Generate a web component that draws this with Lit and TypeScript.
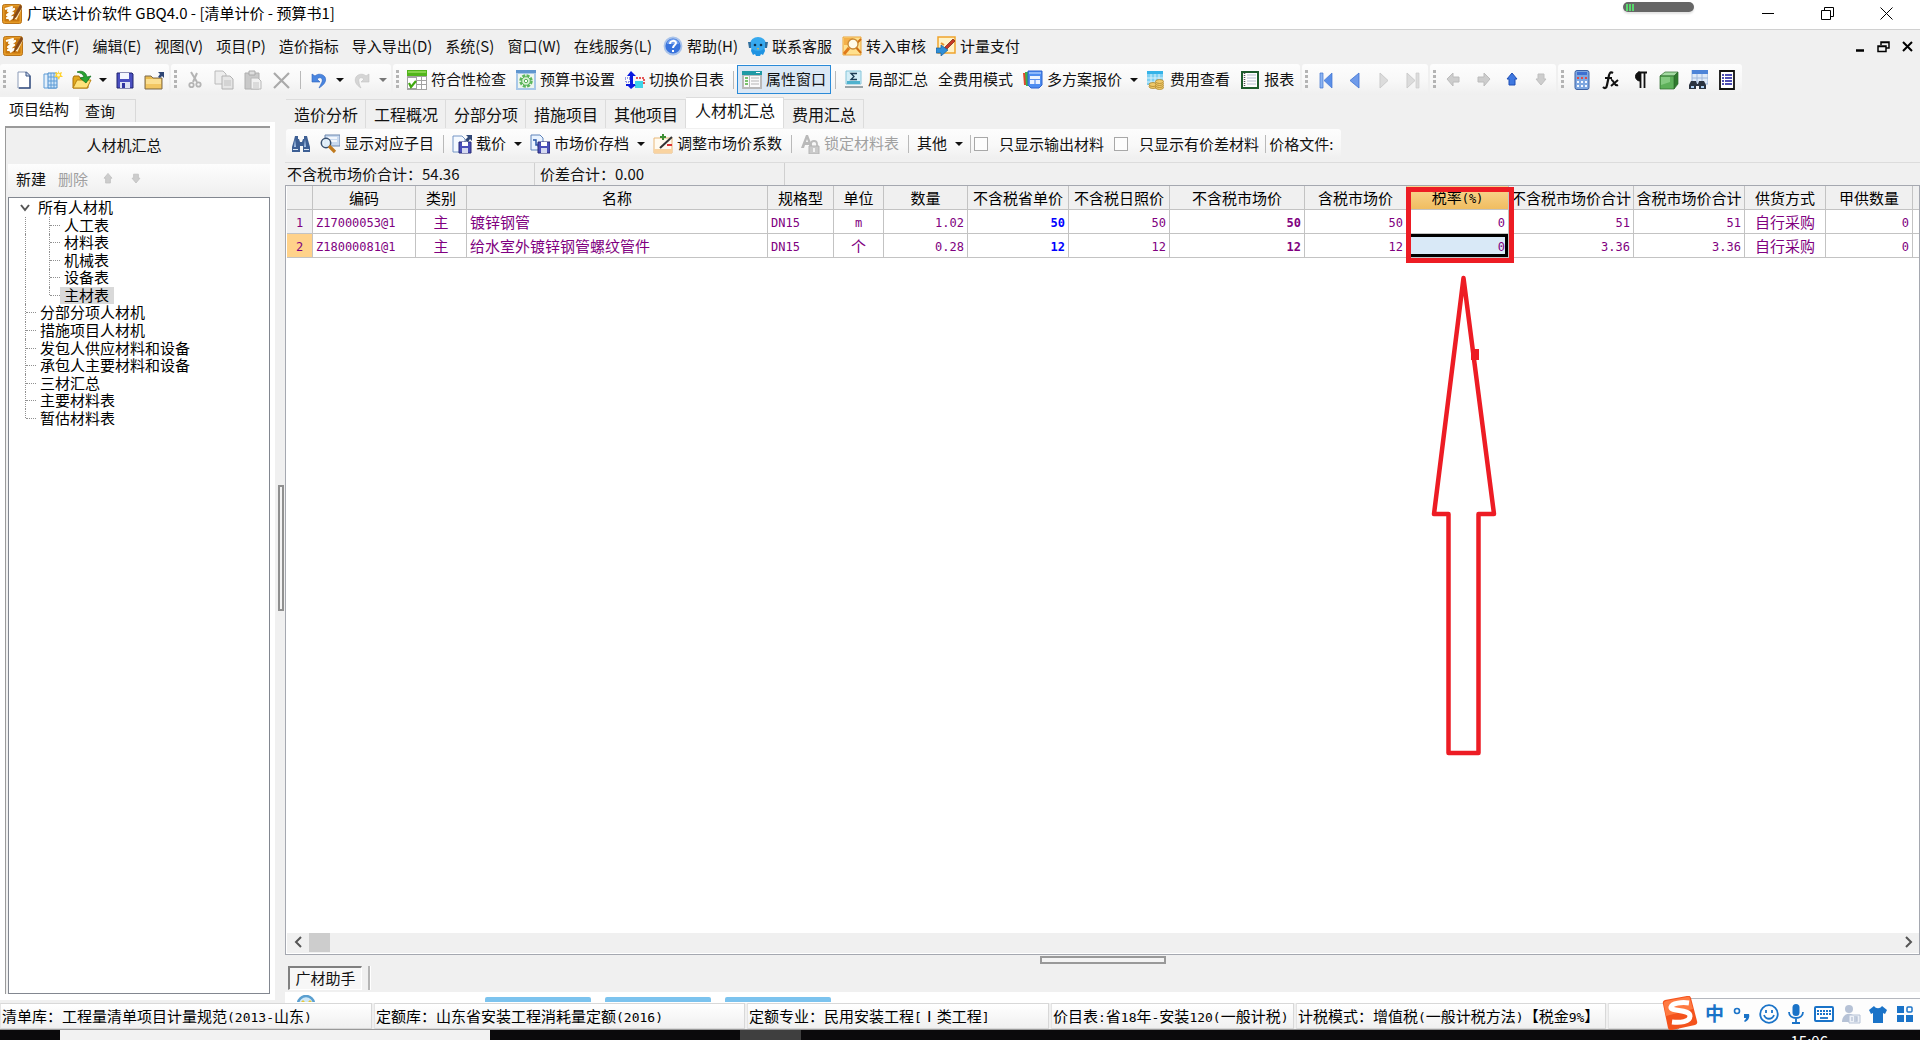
import { LitElement, html, css, svg, nothing } from "lit";
import type { SVGTemplateResult, TemplateResult } from "lit";
import { customElement } from "lit/decorators.js";
import { classMap } from "lit/directives/class-map.js";

const art: Record<string, SVGTemplateResult> = {
  logo: svg`<rect x="0.500" y="0.500" width="19" height="19" rx="2" fill="#e59a26" stroke="#b9741a"/><rect x="2.500" y="2.500" width="15" height="15" rx="1" fill="#c9780f"/><path d="M3 5l7-2-4 4 6-2-7 6 6-2-6 5 6-1-4 3" fill="none" stroke="#fffdf5" stroke-width="2.200" stroke-linejoin="round"/><path d="M19 2L13 15" stroke="#fbe3b0" stroke-width="3.500"/><path d="M18 1l-6 11-1 4 3-3 6-10z" fill="#8a4a14" stroke="#6e3408" stroke-width=".5"/>`,
  file: svg`<path d="M4 2h8l4 4v12H4z" fill="#fff" stroke="#8d9cb8"/><path d="M12 2l4 4v12H5" fill="none" stroke="#3b5484" stroke-width="1.500"/><path d="M12 2v4h4" fill="#c9d6ec" stroke="#3b5484"/>`,
  fileGrid: svg`<path d="M1 4h12v14H1z" fill="#e4f0fb" stroke="#5d9bd6"/><path d="M5 3h9v15H5z" fill="#cfe5f8" stroke="#4a8ccc"/><path d="M8 3v15M11 3v15M5 7h9M5 11h9M5 15h9" stroke="#5d9bd6"/><path d="M15 0l1 3 3-1-1 3 2 2-3 0-1 3-2-3-3 0 2-2-1-3 3 1z" fill="#ffd22e"/><circle cx="15.500" cy="5" r="1.500" fill="#fff6c4"/>`,
  open: svg`<path d="M1 8l1-2h5l1 2h8v10H1z" fill="#e2a91d" stroke="#a9730c"/><path d="M1 18l4-8h14l-4 8z" fill="#ffe27a" stroke="#b9820f"/><path d="M5 2c5-2 9 0 10 5l4-1-5 7-6-5 4-1c-1-3-3-4-7-5z" fill="#27a332" stroke="#0f6d1b" stroke-width=".7"/>`,
  save: svg`<path d="M2 3h15l1 1v14H2z" fill="#4a4fc0" stroke="#20246f"/><path d="M5 3h9v6H5z" fill="#f4f6ff"/><path d="M5 12h10v6H5z" fill="#dfe3f5"/><path d="M7 13h3v5H7z" fill="#3136a0"/>`,
  folderUp: svg`<path d="M1 6h6l2 2h9v11H1z" fill="#e9bb4e" stroke="#7c6a4e"/><path d="M2 9h15v9H2z" fill="#fbdf92"/><path d="M2 14h15v4H2z" fill="#f2c662"/><path d="M14 2h6v6l-2-2-2 2-2-1 2-3z" fill="#2f4675"/>`,
  cut: svg`<path d="M6 2l6 10M12 3L8 12" stroke="#b4b4b4" stroke-width="2" fill="none"/><circle cx="6.500" cy="15" r="2.200" fill="none" stroke="#b4b4b4" stroke-width="1.800"/><circle cx="13.500" cy="14.500" r="2.200" fill="none" stroke="#b4b4b4" stroke-width="1.800"/>`,
  copy: svg`<path d="M1 1h8l3 3v10H1z" fill="#ededed" stroke="#bababa"/><path d="M8 6h8l3 3v10H8z" fill="#e6e6e6" stroke="#b2b2b2"/><path d="M10 11h7M10 13h7M10 15h7" stroke="#c2c2c2"/>`,
  paste: svg`<path d="M2 3h14v16H2z" fill="#c9c9c9" stroke="#b0b0b0"/><path d="M6 1h6v4H6z" fill="#dedede" stroke="#aaa"/><path d="M8 8h7l3 3v8H8z" fill="#f1f1f1" stroke="#b8b8b8"/><path d="M10 13h6M10 15h6M10 17h6" stroke="#c4c4c4"/>`,
  del: svg`<path d="M2 3l15 15M17 3L2 18" stroke="#aaa" stroke-width="2.200" fill="none"/>`,
  undo: svg`<path d="M3 4v8h8L8 9c4-3 6 0 5 3-1 2-2 4-3 6 5-3 8-7 6-11-2-3-7-4-10-1z" fill="#4a86e0" stroke="#2b62be" stroke-width=".6"/>`,
  redo: svg`<path d="M17 4v8H9l3-3c-4-3-6 0-5 3 0 2 1 4 2 6C4 15 2 11 4 7c2-3 7-4 10-1z" fill="#d5d5d5" stroke="#c2c2c2" stroke-width=".6"/>`,
  check: svg`<path d="M0 0h20v6H0z" fill="#52b51c"/><path d="M1 1h18v2H1z" fill="#86d34c"/><path d="M0 6h20v14H0z" fill="#a2a2a2"/><path d="M1 8h8v10H1zM10 7h4v3h-4zM15 7h4v3h-4zM10 11h4v3h-4zM15 11h4v3h-4zM10 15h4v4h-4zM15 15h4v4h-4z" fill="#fff"/><path d="M2 13l2 4 5-6" fill="none" stroke="#3fa70f" stroke-width="2.200"/>`,
  gear: svg`<path d="M0 0h20v20H0z" fill="#a9c8e8"/><path d="M0 0h20v3H0z" fill="#5f96cf"/><path d="M2 4h16v14H2z" fill="#eef6ee"/><circle cx="10" cy="11" r="5.500" fill="none" stroke="#5cb85c" stroke-width="2.500" stroke-dasharray="3 1.300"/><circle cx="10" cy="11" r="4.300" fill="#d9f2d3" stroke="#58b058"/><circle cx="10" cy="11" r="1.700" fill="#fff" stroke="#58b058"/>`,
  swap: svg`<path d="M0 8h5v4H0z" fill="#fff" stroke="#2a37d0" stroke-dasharray="1 1"/><path d="M10 11h8v7h-8z" fill="#3fd3e8"/><path d="M11 8h8v6" fill="none" stroke="#e02020" stroke-width="1.500" stroke-dasharray="2 1"/><path d="M6 1l5 5H8v9h3l-5 4-4-4h3V6H2z" fill="#0a1ae0"/><path d="M1 15h9" stroke="#0a1ae0" stroke-width="2"/>`,
  prop: svg`<path d="M0 1h20v18H0z" fill="#b9b9b9"/><path d="M0 1h20v4H0z" fill="#1f9aa5"/><path d="M14 2h4v1h-4z" fill="#fff"/><path d="M2 6h5v11H2zM8 6h10v11H8z" fill="#fafafa"/><path d="M3 8h3M3 11h3M3 14h3" stroke="#4fae3c" stroke-width="1.500"/><path d="M9 8h8M9 11h8M9 14h8" stroke="#b5b5b5"/>`,
  sigma: svg`<path d="M2 1h15v13H2z" fill="#d4eef7" stroke="#86c5da"/><path d="M3 11h13v3H3z" fill="#4fb2ce"/><path d="M1 16h18v2H1z" fill="#9aa4a8"/><path d="M13 3.500H7L10 6.500 7 9.500h6" fill="none" stroke="#1b3a52" stroke-width="1.300"/>`,
  plans: svg`<path d="M0 3h4v12H1z" fill="#e3482e"/><path d="M2 2h4v14H3z" fill="#3fae4c"/><path d="M5 1h14v14l-3 3H8l-3-3z" fill="#4d8cf0" stroke="#2c63cf"/><path d="M6 2h12v2H6z" fill="#8db8fa"/><path d="M7 6h10v8H7z" fill="#eaf2ff"/><path d="M7 9.500h10M12 9v5" stroke="#5b90ee" stroke-width="1.200"/>`,
  coins: svg`<path d="M1 1h16v14H1z" fill="#7fd0f2"/><path d="M1 1h16v3H1z" fill="#35b3e8"/><path d="M5 4v11M9 4v11M13 4v11M1 8h16M1 12h16" stroke="#d8f1fb"/><g fill="#efca6c" stroke="#a77d20" stroke-width=".7"><ellipse cx="7" cy="16.500" rx="4" ry="2"/><ellipse cx="7" cy="14.500" rx="4" ry="2"/><ellipse cx="13.500" cy="17.500" rx="4" ry="2"/><ellipse cx="13.500" cy="15.500" rx="4" ry="2"/><ellipse cx="13.500" cy="13.500" rx="4" ry="2"/><ellipse cx="13.500" cy="11.500" rx="4" ry="2"/></g>`,
  report: svg`<path d="M1 1h18v18H1z" fill="#1d5b2c"/><path d="M3 3h14v14H3z" fill="#fdfdfd"/><path d="M4.500 3v14" stroke="#555" stroke-width="1.500" stroke-dasharray="1 1"/><path d="M7 5h9M7 8h9M7 11h9M7 14h9" stroke="#b5bdd0"/>`,
  first: svg`<path d="M4 3h3v15H4z" fill="#8cb4f2" stroke="#3f72d0" stroke-width=".7"/><path d="M16 3v15L8 10.500z" fill="#5b8fe8" stroke="#3f72d0" stroke-width=".7"/>`,
  prev: svg`<path d="M14 3v15L5 10.500z" fill="#6f9bea" stroke="#3f72d0" stroke-width=".8"/>`,
  next: svg`<path d="M6 3v15l8-7.500z" fill="#dcdcdc" stroke="#cbcbcb"/>`,
  last: svg`<path d="M4 3v15l8-7.500z" fill="#dcdcdc" stroke="#cbcbcb"/><path d="M13 3h3v15h-3z" fill="#dcdcdc" stroke="#cbcbcb" stroke-width=".7"/>`,
  arrowL: svg`<path d="M3 9l6-6v4h6v5H9v4z" fill="#cdcdcd" stroke="#bcbcbc"/>`,
  arrowR: svg`<path d="M17 9l-6-6v4H5v5h6v4z" fill="#cdcdcd" stroke="#bcbcbc"/>`,
  arrowUp: svg`<path d="M10 3l5 6h-2v6H7V9H5z" fill="#3f78e0" stroke="#1f4fb5"/>`,
  arrowDn: svg`<path d="M10 15l5-6h-2V4H7v5H5z" fill="#cdcdcd" stroke="#c0c0c0"/>`,
  arrowUpOff: svg`<path d="M10 3l5 6h-2v6H7V9H5z" fill="#cdcdcd" stroke="#c0c0c0"/>`,
  calc: svg`<rect x="3" y="0.500" width="14" height="19" rx="2" fill="#7ea7e0" stroke="#3c62a5"/><path d="M5 2h10v3H5z" fill="#3e6fd0"/><path d="M5 7h2v2H5zM9 7h2v2H9zM13 7h2v2h-2z" fill="#e04848"/><path d="M5 11h2v2H5zM9 11h2v2H9zM13 11h2v2h-2zM5 15h2v2H5zM9 15h2v2H9zM13 15h2v2h-2z" fill="#f4f8ff"/>`,
  fx: svg`<path d="M12 3c-3-2-4 1-4.500 5L6 15c-.5 3-2 4-4 2M4 8h7" fill="none" stroke="#111" stroke-width="2.200"/><path d="M10 10c3-1 3 7 7 5M17 10l-7 6" fill="none" stroke="#111" stroke-width="2"/>`,
  para: svg`<path d="M10 2a4.500 4.500 0 000 9z" fill="#111" stroke="#111"/><path d="M10.500 2v16M14.500 2v16M8 2.500h9" stroke="#111" stroke-width="1.800" fill="none"/>`,
  cube: svg`<path d="M1 6l5-4h13l-4 4z" fill="#a4dba2" stroke="#2d6b2c" stroke-width=".7"/><path d="M15 6l4-4v12l-4 5z" fill="#2f7a2e" stroke="#2d6b2c" stroke-width=".7"/><path d="M1 6h14v13H1z" fill="#5db05a" stroke="#2d6b2c" stroke-width=".7"/><path d="M2 7h9v5l-9 3z" fill="#84ca81"/>`,
  findWin: svg`<path d="M4 0h16v14H4z" fill="#dfeaf8" stroke="#9cb6dc"/><path d="M4 0h16v4H4z" fill="#4d84d8"/><path d="M9 4v9M14 4v9M4 8h16" stroke="#9fb8dc"/><path d="M3 11h5l1 3h1l1-3h5l2 4v4h-7v-3H8v3H1v-4z" fill="#2b3340"/><path d="M3 16h3v2H3zM13 16h3v2h-3z" fill="#a9cdf1"/>`,
  list: svg`<path d="M3 1h14v18H3z" fill="#fff" stroke="#111" stroke-width="1.800"/><path d="M5 5h2M5 8h2M5 11h2M5 14h2M8 5h7M8 8h7M8 11h7M8 14h7" stroke="#14149a" stroke-width="1.600"/>`,
  bino: svg`<path d="M4 2h3v3h1l1 3h2l1-3h1V2h3l1 4 2 7v5h-7v-6H9v6H1v-5l2-7z" fill="#3d5f94"/><path d="M4 5l-1 8h2zM14 5l-1 8h2z" fill="#a9c6ea"/><path d="M2 15h5v1H2zM13 15h5v1h-5z" fill="#dce8f6"/>`,
  findItem: svg`<path d="M5 1h15v11H5z" fill="#c9daf0" stroke="#6c87ae"/><path d="M8 4h9M8 7h9" stroke="#fff" stroke-width="1.500"/><circle cx="6" cy="9" r="4.700" fill="#e3f1fb" fill-opacity=".9" stroke="#39506f" stroke-width="1.500"/><path d="M9 12l6 6" stroke="#c07a1e" stroke-width="3.200"/>`,
  loadPrice: svg`<path d="M1 2h9l3 3v13H1z" fill="#f4f9ff" stroke="#7496c6"/><path d="M7 8h12v11H7z" fill="#4a4fb8" stroke="#262a76"/><path d="M10 8h6v4h-6z" fill="#fff"/><path d="M10 14h6v5h-6z" fill="#d5d9f0"/><path d="M14 1h6v6l-2-2-2 3-3-2 3-3z" fill="#2f4675"/>`,
  archive: svg`<path d="M1 1h9l3 3v12H1z" fill="#e9f3ff" stroke="#5e83ba"/><path d="M3 6h3v5h4M8 9l2 2-2 2" fill="none" stroke="#2756a6" stroke-width="1.500"/><path d="M8 8h12v11H8z" fill="#4a4fb8" stroke="#262a76"/><path d="M11 8h6v4h-6z" fill="#fff"/><path d="M11 14h6v5h-6z" fill="#d5d9f0"/>`,
  adjust: svg`<path d="M1 4h18v15H1z" fill="#fffaf0" stroke="#e9b878"/><path d="M1 15h18v4H1z" fill="#f9d3a0"/><path d="M7 14L19 3" stroke="#333" stroke-width="2"/><path d="M10 0v6M7 3h6" stroke="#3d8e34" stroke-width="2"/><path d="M14 11h5" stroke="#d33" stroke-width="2"/>`,
  lock: svg`<path d="M1 14L6 1h2l5 13h-3l-1-3H5l-1 3zM6 8h2L7 5z" fill="#b9b9b9"/><path d="M11 12v-2a3 3 0 016 0v2" fill="none" stroke="#bcbcbc" stroke-width="1.800"/><path d="M9 12h10v8H9z" fill="#cacaca" stroke="#b5b5b5"/><path d="M13 14h2v4h-2z" fill="#f2f2f2"/>`,
  help: svg`<circle cx="10" cy="10" r="8.500" fill="#3a74dd" stroke="#a9c3ea" stroke-width="1.800"/><path d="M4 8a6 5 0 0112 0z" fill="#8db5f5" opacity=".7"/><path d="M7 8c0-4 6-4 6-1 0 2-3 2-3 5M10 14v2" fill="none" stroke="#fff" stroke-width="2"/>`,
  service: svg`<path d="M4 9h12l1 6-2 4-2-1-1 2H8l-1-2-2 1-2-4z" fill="#1f93e2"/><ellipse cx="10" cy="8" rx="8" ry="7" fill="#37a9ee"/><path d="M0 6h3v6H1zM17 6h3l-1 6h-2z" fill="#2f6f9f"/><circle cx="7" cy="9" r="1.300" fill="#10334f"/><circle cx="13" cy="9" r="1.300" fill="#10334f"/><path d="M9 12h2l-1 2z" fill="#f5b32c"/>`,
  audit: svg`<path d="M1 1h18v18H1z" fill="#ffe08e" stroke="#eba53a"/><path d="M2 2h9v7H2z" fill="#f4b04a"/><path d="M12 9l7 8M15 7l4-4" stroke="#cf6f14" stroke-width="2"/><circle cx="11" cy="8" r="5" fill="#fffbe8" stroke="#c98a35" stroke-width="1.300"/><path d="M7 12l-5 6" stroke="#e07a1a" stroke-width="3"/>`,
  pay: svg`<path d="M2 1h17v16H2z" fill="#fff3c8" stroke="#efa42c" stroke-width="1.500"/><path d="M17 3l-8 8-2 4 4-2 8-8z" fill="#c63a27" stroke="#7a1e12" stroke-width=".7"/><path d="M5 7l3 2" stroke="#e8922a" stroke-width="2"/><path d="M0 12h5V9l7 5-7 6v-3H0z" fill="#2f8fd8" stroke="#1c5f9a" stroke-width=".7"/>`,
};

const icon = (name: string, cls = "ico"): TemplateResult =>
  html`<svg class=${cls} viewBox="0 0 20 20" aria-hidden="true">${art[name]}</svg>`;

/* Half-width runs are set in the fixed-pitch face, full-width runs in the CJK face. */
const mixed = (text: string) =>
  text
    .split(/([\x21-\x7e]+)/)
    .filter((s) => s !== "")
    .map((s) => (/^[\x21-\x7e]+$/.test(s) ? html`<span class="half">${s}</span>` : s));

interface Tool {
  kind: "icon" | "label" | "arrow" | "sep";
  icon?: string;
  text?: string;
  name?: string;
  off?: boolean;
  on?: boolean;
}
const I = (icon: string, name: string, off = false): Tool => ({ kind: "icon", icon, name, off });
const L = (text: string, icon?: string, extra: Partial<Tool> = {}): Tool => ({ kind: "label", text, icon, ...extra });
const A = (name: string, off = false): Tool => ({ kind: "arrow", name, off });
const S: Tool = { kind: "sep" };

const groups: Tool[][] = [
  [I("file", "新建"), I("fileGrid", "新建向导"), I("open", "打开"), A("打开选项"), I("save", "保存"), I("folderUp", "另存")],
  [I("cut", "剪切", true), I("copy", "复制", true), I("paste", "粘贴", true), I("del", "删除", true), S, I("undo", "撤销"), A("撤销选项"), I("redo", "恢复", true), A("恢复选项", true)],
  [L("符合性检查", "check"), L("预算书设置", "gear"), L("切换价目表", "swap"), S, L("属性窗口", "prop", { on: true }), S, L("局部汇总", "sigma"), L("全费用模式"), L("多方案报价", "plans"), A("多方案报价选项"), L("费用查看", "coins"), L("报表", "report")],
  [I("first", "首条"), I("prev", "上一条"), I("next", "下一条", true), I("last", "末条", true)],
  [I("arrowL", "左移", true), I("arrowR", "右移", true), I("arrowUp", "上移"), I("arrowDn", "下移", true)],
  [I("calc", "计算器"), I("fx", "函数"), I("para", "特殊符号"), I("cube", "图元"), I("findWin", "查找"), I("list", "列表")],
];

const summaryTools: Tool[] = [
  I("bino", "查找"), L("显示对应子目", "findItem"), S, L("载价", "loadPrice"), A("载价选项"), L("市场价存档", "archive"), A("市场价存档选项"),
  L("调整市场价系数", "adjust"), S, L("锁定材料表", "lock", { off: true }), S, L("其他"), A("其他选项"), S,
];

const menus: [string, string?][] = [
  ["文件(F)"], ["编辑(E)"], ["视图(V)"], ["项目(P)"], ["造价指标"], ["导入导出(D)"], ["系统(S)"], ["窗口(W)"], ["在线服务(L)"],
  ["帮助(H)", "help"], ["联系客服", "service"], ["转入审核", "audit"], ["计量支付", "pay"],
];

const tree: [string, number][] = [
  ["所有人材机", 0], ["人工表", 2], ["材料表", 2], ["机械表", 2], ["设备表", 2], ["主材表", 2],
  ["分部分项人材机", 1], ["措施项目人材机", 1], ["发包人供应材料和设备", 1], ["承包人主要材料和设备", 1], ["三材汇总", 1], ["主要材料表", 1], ["暂估材料表", 1],
];

const columns: [string, number, string][] = [
  ["编码", 103, "l"], ["类别", 51, "c"], ["名称", 301, "l"], ["规格型", 66, "l"], ["单位", 50, "c"], ["数量", 84, "r"],
  ["不含税省单价", 101, "r blue"], ["不含税日照价", 101, "r"], ["不含税市场价", 135, "r strong"], ["含税市场价", 102, "r"], ["税率(%)", 102, "r"],
  ["不含税市场价合计", 125, "r"], ["含税市场价合计", 111, "r"], ["供货方式", 81, "c"], ["甲供数量", 87, "r"],
];
const rows = [
  ["Z17000053@1", "主", "镀锌钢管", "DN15", "m", "1.02", "50", "50", "50", "50", "0", "51", "51", "自行采购", "0"],
  ["Z18000081@1", "主", "给水室外镀锌钢管螺纹管件", "DN15", "个", "0.28", "12", "12", "12", "12", "0", "3.36", "3.36", "自行采购", "0"],
];
const TAX = 10;

const status: [string, number][] = [
  ["清单库：工程量清单项目计量规范(2013-山东)", 372],
  ["定额库：山东省安装工程消耗量定额(2016)", 371],
  ["定额专业：民用安装工程[Ⅰ类工程]", 302],
  ["价目表:省18年-安装120(一般计税)", 243],
  ["计税模式：增值税(一般计税方法)【税金9%】", 310],
];

@customElement("app-root")
export class AppRoot extends LitElement {
  static styles = css`
    :host {
      display: block;
      font-family: "Noto Sans CJK SC", "Liberation Sans", sans-serif;
      font-size: 15px;
      line-height: 20px;
      color: #111;
    }
    * { box-sizing: border-box; }
    button, input { font: inherit; color: inherit; margin: 0; }
    button { background: none; border: 0; padding: 0; white-space: nowrap; }
    .app { position: relative; display: flex; flex-direction: column; height: 100vh; background: #f0f0f0; overflow: hidden; }
    .half { font-family: "DejaVu Sans Mono", monospace; font-size: 12px; }
    .ico { width: 20px; height: 20px; flex: none; display: block; }

    .title { display: flex; align-items: center; height: 30px; padding: 0 4px 2px 2px; background: #fff; border-bottom: 1px solid #d0d0d0; flex: none; }
    .title h1 { flex: 1; margin: 0 0 0 5px; padding-bottom: 1px; font-size: 15px; font-weight: 400; color: #000; }
    .win { width: 59px; height: 27px; display: grid; place-items: center; }
    .win svg { width: 13px; height: 13px; }
    .pill { position: absolute; right: 226px; top: 2px; width: 71px; height: 10px; border-radius: 5px; background: #666; box-shadow: 0 2px 2px #e4e4e4; display: flex; align-items: center; gap: 1px; padding-left: 3px; }
    .pill i { width: 2px; height: 7px; background: #58d86c; }

    .menu { display: flex; align-items: center; height: 34px; padding: 0 6px 2px 3px; flex: none; }
    .menu nav { display: flex; flex: 1; margin-left: 1px; }
    .menu nav button { display: flex; align-items: center; gap: 4px; padding: 0 6px 0 7px; }
    .menu nav span { padding-bottom: 1px; }
    .menu nav .with { padding: 0 5px; }
    .mdi { display: flex; gap: 11px; }
    .mdi svg { width: 13px; height: 13px; display: block; }

    .bar { display: flex; gap: 2px; height: 33px; flex: none; }
    .group { display: flex; align-items: center; height: 31px; padding-right: 1px; border-radius: 3px; background: linear-gradient(#fdfdfd, #f8f8f8 55%, #efefef); }
    .grip { width: 9px; height: 19px; display: flex; justify-content: center; flex: none; }
    .grip::before { content: ""; width: 3px; background: repeating-linear-gradient(#b4b4b4 0 3px, transparent 3px 5px); }
    .icb { width: 29px; height: 29px; display: grid; place-items: center; flex: none; }
    .lab { display: flex; align-items: center; gap: 4px; height: 29px; padding: 0 5px; flex: none; }
    .lab span { padding-bottom: 2px; }
    .lab.on { background: #dbe8f5; box-shadow: inset 0 0 0 1px #2a8ad8; }
    .lab.off { color: #a0a0a0; }
    .drop { width: 14px; height: 29px; display: grid; place-items: center; flex: none; }
    .drop::before { content: ""; border: 4px solid transparent; border-top-color: #111; border-bottom: 0; }
    .drop.off::before { border-top-color: #777; }
    .sep { width: 8px; height: 18px; display: flex; justify-content: center; flex: none; }
    .sep::before { content: ""; width: 1px; background: #b9b9b9; }

    .body { flex: 1; min-height: 0; display: grid; grid-template-columns: 275px 10px minmax(0, 1fr); }
    .side { display: flex; flex-direction: column; min-height: 0; padding-bottom: 3px; }
    .sidetabs { display: flex; align-items: flex-end; height: 25px; flex: none; }
    .sidetabs button { height: 23px; padding: 0 20px 0 6px; border: 1px solid #d9d9d9; border-left: 0; border-bottom: 0; }
    .sidetabs .sel { height: 25px; padding: 0 9px 2px; background: #fff; border-color: #fff; }
    .panel { flex: 1; min-height: 0; display: flex; flex-direction: column; border: solid #fff; border-width: 4px 5px 6px 5px; }
    .panelin { flex: 1; min-height: 0; display: flex; flex-direction: column; border: solid #9a9a9a; border-width: 2px 0 0 1px; padding-left: 2px; }
    .panel h2 { margin: 0; height: 36px; font-size: 15px; font-weight: 400; line-height: 34px; text-align: center; padding-right: 30px; flex: none; }
    .edit { display: flex; align-items: center; height: 33px; padding: 0 0 3px 8px; gap: 12px; background: linear-gradient(#fdfdfd, #efefef); flex: none; }
    .edit .gray { color: #a0a0a0; }
    .edit .ico { width: 16px; height: 16px; }
    .treebox { flex: 1; background: #fff; border: 1px solid #828790; padding: 1px 0 0 11px; }
    .tree { list-style: none; margin: 0; padding: 0; height: 228px; display: grid; grid-auto-rows: minmax(0, 1fr); }
    .tree li { display: flex; align-items: center; min-height: 0; color: #000; line-height: 17px; }
    .tree .guide { width: 6px; align-self: stretch; flex: none; }
    .tree .v { border-right: 1px dotted #909090; }
    .tree .half-v { align-self: flex-start; height: 50%; }
    .tree .h { width: 10px; border-top: 1px dotted #909090; flex: none; }
    .tree .in { width: 24px; }
    .tree .chev { width: 10px; height: 10px; margin-right: 4px; }
    .tree button { padding: 0 5px 1px 4px; line-height: 16px; }
    .tree .cur { background: #d9d9d9; }
    .split { display: flex; align-items: center; justify-content: flex-end; padding: 0 1px 5px 0; }
    .split i { width: 6px; height: 126px; border: 2px solid #909090; background: #f4f4f4; }

    .main { display: flex; flex-direction: column; min-width: 0; min-height: 0; }
    .tabs { display: flex; align-items: flex-end; height: 31px; padding-left: 1px; flex: none; }
    .tabs button { height: 29px; padding: 0 7px 1px 8px; font-size: 16px; border: 1px solid #dcdcdc; border-left: 0; border-bottom: 0; }
    .tabs .sel { height: 31px; padding: 0 8px 6px 9px; background: #fff; }
    .tools { display: flex; height: 35px; padding-left: 1px; border-bottom: 1px solid #dcdcdc; flex: none; }
    .tools .group { height: 30px; margin-top: 1px; padding-right: 8px; }
    .chk { display: flex; align-items: center; gap: 11px; margin-right: 10px; }
    .chk:last-of-type { margin-right: 2px; }
    .chk input { appearance: none; width: 14px; height: 14px; border: 1px solid #a8a8a8; background: #fdfdfd; flex: none; }
    .totals { display: flex; height: 22px; flex: none; line-height: 22px; }
    .totals div { width: 250px; padding-left: 5px; border-right: 1px solid #d0d0d0; white-space: pre; }
    .totals div:first-child { padding-left: 2px; }
    .grid { flex: 1; min-height: 0; display: flex; flex-direction: column; background: #fff; border: 1px solid #a5a8b0; padding: 0 0 1px 1px; }
    .scroller { flex: 1; overflow: hidden; }
    table { width: 100%; border-collapse: separate; border-spacing: 0; table-layout: fixed; }
    th, td { height: 24px; padding: 0 3px; border: solid #c3c3c3; border-width: 0 1px 1px 0; font-weight: 400; overflow: hidden; white-space: nowrap; line-height: 20px; }
    thead th { background: #f0f0f0; color: #000; padding: 0; }
    thead .hot { background: linear-gradient(#fad793, #f0bd60); }
    tbody th { background: #f0f0f0; color: #800080; padding: 0; }
    tbody .act { background: #ffd28a; }
    td { color: #800080; text-align: left; }
    .c { text-align: center; }
    .r { text-align: right; }
    .blue { color: #00f; font-weight: 700; }
    .strong { font-weight: 700; }
    td.focus { background: #d9e9f7; box-shadow: inset 0 0 0 3px #000; }
    .fill { border-right: 0; }
    .hscroll { display: flex; height: 20px; background: #f0f0f0; flex: none; }
    .hscroll button { width: 22px; height: 18px; display: grid; place-items: center; }
    .hscroll svg { width: 9px; height: 12px; }
    .track { flex: 1; }
    .thumb { width: 21px; height: 19px; background: #cdcdcd; }
    .knob { height: 11px; display: flex; justify-content: center; padding: 1px 0 2px; flex: none; }
    .knob i { width: 126px; height: 8px; border: 2px solid #999; background: #f4f4f4; }
    .helper { display: flex; height: 26px; padding: 0 0 2px 3px; gap: 6px; flex: none; }
    .helper button { width: 74px; padding-bottom: 1px; background: #f7f7f7; border: solid; border-width: 2px 1px 1px 2px; border-color: #808080 #fff #fff #808080; }
    .helper::after { content: ""; width: 2px; background: #b5b5b5; border-right: 1px solid #fff; }
    .peek { display: flex; align-items: flex-end; gap: 14px; height: 11px; padding: 0 0 1px 12px; background: #fff; flex: none; overflow: hidden; }
    .peek svg { width: 18px; height: 7px; margin-right: 156px; }
    .peek i { width: 106px; height: 5px; border-radius: 2px 2px 0 0; background: #7cc3ee; }

    .status { display: flex; gap: 3px; height: 27px; background: #f0f0f0; flex: none; white-space: pre; border-bottom: 1px solid #999; color: #000; }
    .status div { padding-left: 1px; border: 1px solid #d8d8d8; border-left-color: #e4e4e4; background: linear-gradient(#fff, #f0f0f0); overflow: hidden; line-height: 23px; margin-right: -1px; }
    .status .half { font-size: 13px; }
    .status .rest { flex: 1; }
    .task { position: relative; display: flex; height: 10px; background: #0b0a0c; padding-left: 60px; flex: none; overflow: hidden; }
    .task .search { width: 430px; background: #f2f2f2; }
    .task .active { width: 61px; margin-left: 250px; background: #3f3f3f; }
    .task time { margin-left: auto; padding: 3px 92px 0 0; color: #fff; font-size: 15px; line-height: 16px; }

    .ime { position: absolute; right: 0; bottom: 10px; width: 242px; height: 32px; border: 1px solid #b5b8bf; border-right: 0; background: #fdfdfd; display: flex; align-items: center; justify-content: space-between; padding: 0 5px 0 26px; }
    .ime svg { width: 20px; height: 20px; display: block; }
    .ime .brand { position: absolute; left: -17px; top: -3px; width: 36px; height: 34px; }
    .ime b { font-size: 19px; line-height: 20px; color: #1a73c8; width: 20px; padding-bottom: 2px; }
    .mark { position: absolute; left: 1406px; top: 187px; width: 108px; height: 570px; pointer-events: none; }
  `;

  private tool(t: Tool) {
    if (t.kind === "sep") return html`<span class="sep"></span>`;
    const off = !!t.off;
    if (t.kind === "arrow") return html`<button class=${classMap({ drop: true, off })} aria-label=${t.name ?? ""}></button>`;
    if (t.kind === "icon") return html`<button class="icb" aria-label=${t.name ?? ""}>${icon(t.icon!)}</button>`;
    return html`<button class=${classMap({ lab: true, off, on: !!t.on })}>${t.icon ? icon(t.icon) : nothing}<span>${t.text}</span></button>`;
  }

  private treeRow([text, level]: [string, number], i: number) {
    if (level === 0)
      return html`<li><svg class="chev" viewBox="0 0 10 10"><path d="M1 2l4 5 4-5" fill="none" stroke="#555" stroke-width="2"/></svg><button>${text}</button></li>`;
    const end = i === tree.length - 1;
    const childEnd = level === 2 && tree[i + 1][1] !== 2;
    return html`<li>
      <span class=${classMap({ guide: true, v: true, "half-v": end })}></span>
      ${level === 2
        ? html`<span class=${classMap({ guide: true, in: true, v: true, "half-v": childEnd })}></span>`
        : nothing}
      <span class="h"></span><button class=${text === "主材表" ? "cur" : ""}>${text}</button>
    </li>`;
  }

  render() {
    return html`<div class="app">
      <header class="title">
        ${icon("logo")}
        <h1>广联达计价软件 GBQ4.0 - [清单计价 - 预算书1]</h1>
        <button class="win" aria-label="最小化"><svg viewBox="0 0 13 13"><path d="M0 6.500h12" stroke="#000"/></svg></button>
        <button class="win" aria-label="还原"><svg viewBox="0 0 13 13"><path d="M.5 3.500h9v9h-9zM3.500 3V.5h9v9H10" fill="none" stroke="#000"/></svg></button>
        <button class="win" aria-label="关闭"><svg viewBox="0 0 13 13"><path d="M.5.5l12 12M12.500.5l-12 12" stroke="#000"/></svg></button>
        <div class="pill"><i></i><i></i><i></i></div>
      </header>

      <div class="menu">
        ${icon("logo")}
        <nav>${menus.map(([t, ic]) => html`<button class=${ic ? "with" : ""}>${ic ? icon(ic) : nothing}<span>${t}</span></button>`)}</nav>
        <div class="mdi">
          <button aria-label="最小化文档"><svg viewBox="0 0 13 13"><path d="M3 10.500h8" stroke="#000" stroke-width="2.500"/></svg></button>
          <button aria-label="还原文档"><svg viewBox="0 0 13 13"><path d="M1 6h8v5.500H1zM4 5V2h8v6H9M1 6.500h8M4 2.500h8" fill="none" stroke="#000" stroke-width="1.500"/></svg></button>
          <button aria-label="关闭文档"><svg viewBox="0 0 13 13"><path d="M2 2l9 9M11 2l-9 9" stroke="#000" stroke-width="2"/></svg></button>
        </div>
      </div>

      <div class="bar">${groups.map((g) => html`<div class="group"><span class="grip"></span>${g.map((t) => this.tool(t))}</div>`)}</div>

      <div class="body">
        <aside class="side">
          <div class="sidetabs"><button class="sel">项目结构</button><button>查询</button></div>
          <div class="panel"><div class="panelin">
            <h2>人材机汇总</h2>
            <div class="edit"><button>新建</button><button class="gray">删除</button><button aria-label="上移">${icon("arrowUpOff")}</button><button aria-label="下移">${icon("arrowDn")}</button></div>
            <div class="treebox"><ul class="tree">${tree.map((n, i) => this.treeRow(n, i))}</ul></div>
          </div></div>
        </aside>
        <div class="split"><i></i></div>

        <main class="main">
          <div class="tabs">
            ${["造价分析", "工程概况", "分部分项", "措施项目", "其他项目", "人材机汇总", "费用汇总"].map(
              (t) => html`<button class=${t === "人材机汇总" ? "sel" : ""}>${t}</button>`,
            )}
          </div>
          <div class="tools"><div class="group">
            ${summaryTools.map((t) => this.tool(t))}
            <label class="chk"><input type="checkbox" />只显示输出材料</label>
            <label class="chk"><input type="checkbox" />只显示有价差材料</label>
            <span class="sep"></span><span>价格文件:</span>
          </div></div>
          <div class="totals"><div>不含税市场价合计：54.36</div><div>价差合计：0.00</div></div>
          <section class="grid">
            <div class="scroller">
              <table>
                <colgroup><col style="width:26px" />${columns.map((c) => html`<col style="width:${c[1]}px" />`)}<col /></colgroup>
                <thead><tr><th></th>${columns.map((c, i) => html`<th class=${i === TAX ? "hot" : ""}>${mixed(c[0])}</th>`)}<th class="fill"></th></tr></thead>
                <tbody>
                  ${rows.map((r, ri) => html`<tr>
                    <th class=${ri === 1 ? "act" : ""}>${mixed(String(ri + 1))}</th>
                    ${r.map((v, i) => html`<td class="${columns[i][2]}${ri === 1 && i === TAX ? " focus" : ""}">${mixed(v)}</td>`)}
                    <td class="fill"></td>
                  </tr>`)}
                </tbody>
              </table>
            </div>
            <div class="hscroll">
              <button aria-label="向左滚动"><svg viewBox="0 0 9 12"><path d="M7 1L2 6l5 5" fill="none" stroke="#555" stroke-width="2"/></svg></button>
              <div class="track"><div class="thumb"></div></div>
              <button aria-label="向右滚动"><svg viewBox="0 0 9 12"><path d="M2 1l5 5-5 5" fill="none" stroke="#555" stroke-width="2"/></svg></button>
            </div>
          </section>
          <div class="knob"><i></i></div>
          <div class="helper"><button>广材助手</button></div>
          <div class="peek">
            <svg viewBox="0 0 18 7"><circle cx="9" cy="9" r="8" fill="#cfe8f7" stroke="#5a9fd0" stroke-width="2.500"/><path d="M4 7l2-2 2 2zM11 7l2-2 2 2z" fill="#e8c63a"/></svg>
            <i></i><i></i><i></i>
          </div>
        </main>
      </div>

      <footer class="status">${status.map(([t, w]) => html`<div style="width:${w}px">${mixed(t)}</div>`)}<div class="rest"></div></footer>
      <div class="task"><div class="search"></div><div class="active"></div><time>15:06</time></div>

      <div class="ime">
        <svg class="brand" viewBox="0 0 36 34"><path d="M1 8q-1-3 2-4L25 0q3-1 4 2l6 23q1 3-2 4L10 34q-3 1-4-2z" fill="#f4531d"/><path d="M2 9q-1-3 2-4L25 1q3-1 3 2l3 10L4 20z" fill="#ff7a42"/><path d="M27 7c-7-1-17 0-18 4-1 5 19 2 19 9 0 6-10 7-18 6" fill="none" stroke="#fff" stroke-width="5"/></svg>
        <b>中</b>
        <svg viewBox="0 0 20 20"><circle cx="5" cy="7" r="2.500" fill="none" stroke="#1a73c8" stroke-width="1.600"/><path d="M12 10h5c1 4-1 7-4 8l-1-1c1-1 2-2 2-3h-2z" fill="#1a73c8"/></svg>
        <svg viewBox="0 0 20 20"><circle cx="10" cy="10" r="8.800" fill="none" stroke="#1a73c8" stroke-width="1.800"/><path d="M7 6v3M13 6v3M5 11c2 5 8 5 10 0" fill="none" stroke="#1a73c8" stroke-width="1.800"/></svg>
        <svg viewBox="0 0 20 20"><rect x="6.500" y="0" width="7" height="12" rx="3.500" fill="#1a73c8"/><path d="M3 8c0 8 14 8 14 0M10 14v4M6 19h8" fill="none" stroke="#1a73c8" stroke-width="1.800"/></svg>
        <svg viewBox="0 0 20 20"><rect x="1" y="3" width="18" height="14" rx="1" fill="#fff" stroke="#1a73c8" stroke-width="2"/><path d="M3 7h14M3 10h14" stroke="#1a73c8" stroke-width="1.800" stroke-dasharray="2 1"/><path d="M6 14h8" stroke="#1a73c8" stroke-width="1.800"/></svg>
        <svg viewBox="0 0 20 20"><circle cx="8" cy="5" r="4" fill="#b6c2d6"/><path d="M1 18c0-11 14-11 14 0z" fill="#b6c2d6"/><path d="M8 11h11v8H8z" fill="#edf1f7" stroke="#b6c2d6"/><path d="M11 13v4M13 13h3v4h-3M13 15h3" fill="none" stroke="#b6c2d6" stroke-width="1.300"/></svg>
        <svg viewBox="0 0 20 20"><path d="M6 2c2 3 6 3 8 0l5 4-2 4-2-1v10H5V9l-2 1-2-4z" fill="#1a73c8"/></svg>
        <svg viewBox="0 0 20 20"><path d="M2 2h7v7H2zM2 11h7v7H2zM11 11h7v7h-7z" fill="#1a73c8"/><rect x="12" y="3" width="5" height="5" rx="1" fill="none" stroke="#1a73c8" stroke-width="1.500"/></svg>
      </div>

      <svg class="mark" viewBox="0 0 108 570" aria-hidden="true">
        <g fill="none" stroke="#ed1c24" stroke-width="5">
          <rect x="2.500" y="2.500" width="103" height="71"/>
          <path stroke-width="4.500" stroke-linejoin="round" d="M57.500 91L28 327h14.500v239h30V327H88z"/>
          <path d="M65 162h8v11h-8z" fill="#ed1c24" stroke="none"/>
        </g>
      </svg>
    </div>`;
  }
}
